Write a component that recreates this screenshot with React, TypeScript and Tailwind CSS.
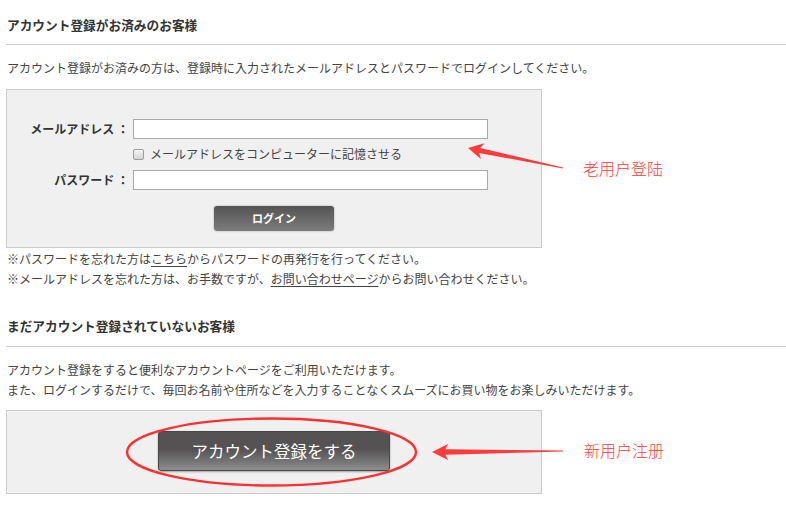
import React from 'react'

const jp = { fontFamily: '"Noto Sans CJK JP", "Noto Sans", sans-serif' }

/**
 * Text input with the plain grey frame from the screenshot
 */
function Field() {
  return <div className="h-[20px] w-[355px] border border-[#a9a9a9] bg-white" />
}

/**
 * Red hand-drawn annotations lying over the page
 */
function Annotations() {
  return (
    <>
      <svg className="pointer-events-none absolute left-0 top-0" width="786" height="516" viewBox="0 0 786 516">
        <polygon
          points="468,148 484.3,143.3 480.2,148.1 563.1,167.5 562.9,168.5 479.2,152.9 481,158.9"
          fill="#ff3b3b"
        />
        <polygon points="432,452 448,444 445.5,449.3 563,450.6 563,451.6 445.5,454.7 448,460" fill="#ff3b3b" />
        <ellipse cx="271.5" cy="452" rx="144.5" ry="33.5" fill="none" stroke="#ff3030" strokeWidth="2.4" />
      </svg>
      <div
        className="absolute left-[583px] top-[158px] text-[16px] font-light leading-[20px] text-[#ff3a3a]"
        style={{ fontFamily: '"Noto Sans CJK SC", sans-serif' }}
      >
        老用户登陆
      </div>
      <div
        className="absolute left-[584px] top-[440px] text-[16px] font-light leading-[20px] text-[#ff3a3a]"
        style={{ fontFamily: '"Noto Sans CJK SC", sans-serif' }}
      >
        新用户注册
      </div>
    </>
  )
}

export default function App() {
  return (
    <div className="relative h-[516px] w-[786px] overflow-hidden bg-white text-[#333]" style={jp}>
      <div className="pl-[6px] pt-[15px]">
        {/* Registered customers */}
        <h2 className="pl-[1px] text-[12.7px] font-bold leading-[20px] text-[#333]">アカウント登録がお済みのお客様</h2>
        <div className="mt-[9px] border-t border-[#cfcfcf]" />
        <p className="mt-[13px] pl-[1px] text-[12px] leading-[20px] text-[#444]">
          アカウント登録がお済みの方は、登録時に入力されたメールアドレスとパスワードでログインしてください。
        </p>

        <div className="mt-[11px] w-[536px] border border-[#cccccc] bg-[#f0f0f0] pb-[16px] pt-[29px]">
          <div className="flex items-center">
            <label className="w-[122px] text-right text-[12px] font-bold leading-[20px] text-[#333]">
              メールアドレス ：
            </label>
            <div className="ml-[4px]">
              <Field />
            </div>
          </div>
          <div className="mt-[5px] flex h-[20px] items-center pl-[126px]">
            <span className="h-[11px] w-[11px] rounded-[2px] border border-[#9d9d9d] bg-linear-to-b from-[#f4f4f4] to-[#d6d6d6]" />
            <span className="ml-[6px] text-[12px] leading-[20px] text-[#444]">メールアドレスをコンピューターに記憶させる</span>
          </div>
          <div className="mt-[6px] flex items-center">
            <label className="w-[122px] text-right text-[12px] font-bold leading-[20px] text-[#333]">
              パスワード ：
            </label>
            <div className="ml-[4px]">
              <Field />
            </div>
          </div>
          <div className="mt-[16px] flex justify-center">
            <button className="flex h-[25px] w-[120px] items-center justify-center rounded-[3px] bg-linear-to-b from-[#545454] to-[#7c7c7c] text-[11px] font-bold text-white shadow-[0_0_2px_rgba(0,0,0,0.35)]">
              ログイン
            </button>
          </div>
        </div>

        <div className="mt-[1px] pl-[1px] text-[12px] leading-[20px] text-[#444]">
          <p>
            ※パスワードを忘れた方は<span className="underline underline-offset-2">こちら</span>からパスワードの再発行を行ってください。
          </p>
          <p>
            ※メールアドレスを忘れた方は、お手数ですが、<span className="underline underline-offset-2">お問い合わせページ</span>からお問い合わせください。
          </p>
        </div>

        {/* New customers */}
        <h2 className="mt-[27px] pl-[1px] text-[12.7px] font-bold leading-[20px] text-[#333]">
          まだアカウント登録されていないお客様
        </h2>
        <div className="mt-[10px] border-t border-[#cfcfcf]" />
        <div className="mt-[13px] pl-[1px] text-[12px] leading-[20px] text-[#444]">
          <p>アカウント登録をすると便利なアカウントページをご利用いただけます。</p>
          <p>また、ログインするだけで、毎回お名前や住所などを入力することなくスムーズにお買い物をお楽しみいただけます。</p>
        </div>

        <div className="mt-[10px] w-[536px] border border-[#cccccc] bg-[#f0f0f0] pb-[22px] pt-[20px]">
          <div className="flex justify-center">
            <button className="flex h-[40px] w-[232px] items-center justify-center rounded-[3px] border border-[#484848] bg-linear-to-b from-[#545252] from-45% to-[#8e8e8e] text-[16.5px] text-white shadow-[0_1px_2px_rgba(0,0,0,0.35)]">
              アカウント登録をする
            </button>
          </div>
        </div>
      </div>

      <Annotations />
    </div>
  )
}
